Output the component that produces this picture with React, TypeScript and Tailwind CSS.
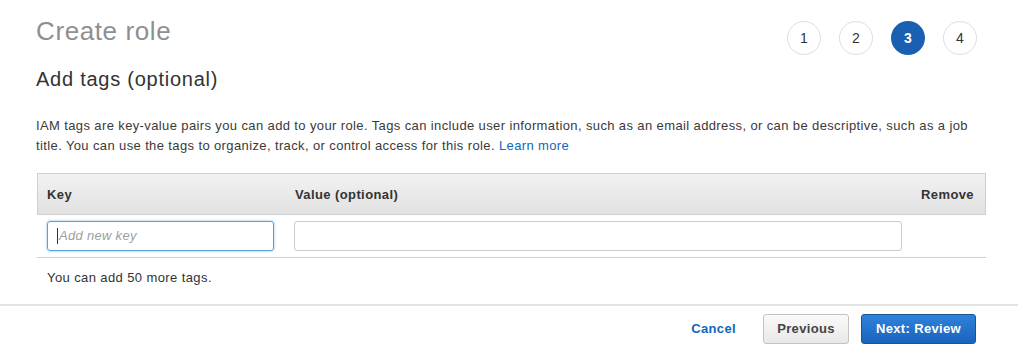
import React from "react";

const steps = [1, 2, 3, 4];

export default function App() {
  return (
    <div className="w-[1024px] h-[352px] bg-white text-[#333] font-['Liberation_Sans',Arial,sans-serif] overflow-hidden">
      <div className="pl-[36px] pr-[38px]">
        <div className="flex justify-between items-start pt-[15px]">
          <h1 className="text-[26px] leading-[32px] tracking-[0.6px] text-[#8f8f8f]">Create role</h1>
          <div className="flex gap-[18px] mt-[6px] mr-[9px]">
            {steps.map((s) => (
              <div
                key={s}
                className={
                  s === 3
                    ? "w-[34px] h-[34px] rounded-full bg-[#1b5fb3] text-white font-bold text-[14px] flex items-center justify-center"
                    : "w-[34px] h-[34px] rounded-full border border-[#dedede] text-[#333] text-[14px] flex items-center justify-center"
                }
              >
                {s}
              </div>
            ))}
          </div>
        </div>

        <h2 className="mt-[12px] text-[20px] leading-[24px] tracking-[0.75px] text-[#333]">Add tags (optional)</h2>

        <p className="mt-[25px] text-[13px] leading-[20px] tracking-[0.38px] text-[#3a3a3a]">
          IAM tags are key-value pairs you can add to your role. Tags can include user information, such as an email address, or can be descriptive, such as a job title. You can use the tags to organize, track, or control access for this role.{" "}
          <a className="text-[#1166bb]" href="#">Learn more</a>
        </p>

        <div className="mt-[17px] ml-[1px]">
          <div className="flex items-center h-[42px] pt-[2px] border border-[#cfcfcf] bg-gradient-to-b from-[#f2f2f2] to-[#e1e1e1] text-[13px] tracking-[0.4px] font-bold text-[#333]">
            <div className="w-[247px] pl-[9px]">Key</div>
            <div className="flex-1 pl-[10px]">Value (optional)</div>
            <div className="pr-[11px]">Remove</div>
          </div>
          <div className="flex pt-[6px] pb-[6px] border-b border-[#cfcfcf]">
            <div className="w-[247px] pl-[10px] pr-[10px]">
              <div className="h-[30px] rounded-[3px] border border-[#5b9dd9] shadow-[0_0_3px_#8fc0ee] flex items-center pl-[9px] text-[13px] tracking-[0.3px] italic text-[#a0a0a0]">
                <span className="w-px h-[16px] bg-[#333] mr-[1px]"></span>
                Add new key
              </div>
            </div>
            <div className="w-[628px] pl-[10px] pr-[10px]">
              <div className="h-[30px] rounded-[3px] border border-[#cccccc]"></div>
            </div>
          </div>
          <div className="mt-[10px] pl-[10px] text-[13px] leading-[20px] tracking-[0.4px] text-[#333]">You can add 50 more tags.</div>
        </div>
      </div>

      <div className="mt-[16px] w-[1018px] h-[2px] bg-[#e3e3e3]"></div>

      <div className="flex justify-end items-center pt-[8px] pr-[48px] text-[13px] font-bold tracking-[0.35px]">
        <a href="#" className="text-[#1166bb] mr-[27px]">Cancel</a>
        <button className="w-[86px] h-[30px] rounded-[3px] border border-[#c2c2c2] bg-gradient-to-b from-[#fafafa] to-[#e8e8e8] text-[#444] mr-[12px]">
          Previous
        </button>
        <button className="w-[115px] h-[30px] rounded-[3px] border border-[#1c5597] bg-gradient-to-b from-[#2f82da] to-[#1a63bd] text-white">
          Next: Review
        </button>
      </div>
    </div>
  );
}
